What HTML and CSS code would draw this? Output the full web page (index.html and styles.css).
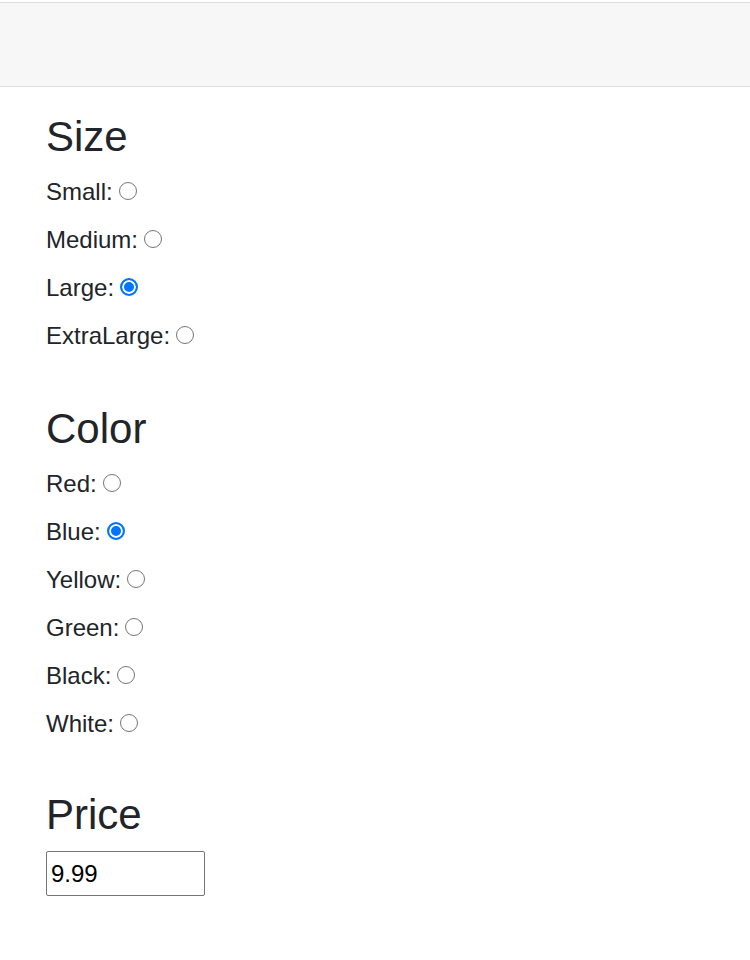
FILE: index.html
```html
<!DOCTYPE html>
<html>
<head>
<meta charset="utf-8">
<link rel="stylesheet" href="styles.css">
</head>
<body>
<header class="topbar"></header>
<main class="content">
  <section class="group">
    <h1 class="group-title">Size</h1>
    <div class="option"><label class="option-label" for="s1">Small:</label><input class="radio" type="radio" name="size" id="s1"></div>
    <div class="option"><label class="option-label" for="s2">Medium:</label><input class="radio" type="radio" name="size" id="s2"></div>
    <div class="option"><label class="option-label" for="s3">Large:</label><input class="radio" type="radio" name="size" id="s3" checked></div>
    <div class="option"><label class="option-label" for="s4">ExtraLarge:</label><input class="radio" type="radio" name="size" id="s4"></div>
  </section>
  <section class="group">
    <h1 class="group-title">Color</h1>
    <div class="option"><label class="option-label" for="c1">Red:</label><input class="radio" type="radio" name="color" id="c1"></div>
    <div class="option"><label class="option-label" for="c2">Blue:</label><input class="radio" type="radio" name="color" id="c2" checked></div>
    <div class="option"><label class="option-label" for="c3">Yellow:</label><input class="radio" type="radio" name="color" id="c3"></div>
    <div class="option"><label class="option-label" for="c4">Green:</label><input class="radio" type="radio" name="color" id="c4"></div>
    <div class="option"><label class="option-label" for="c5">Black:</label><input class="radio" type="radio" name="color" id="c5"></div>
    <div class="option"><label class="option-label" for="c6">White:</label><input class="radio" type="radio" name="color" id="c6"></div>
  </section>
  <section class="group group-price">
    <h1 class="group-title">Price</h1>
    <input class="price-input" type="text" value="9.99">
  </section>
</main>
</body>
</html>
```
FILE: styles.css
```css
html, body {
  margin: 0;
  padding: 0;
  background: #fff;
}
body {
  font-family: "Liberation Sans", Arial, sans-serif;
  color: #212529;
  padding-top: 2px;
}
.topbar {
  height: 83px;
  background: #f7f7f7;
  border-top: 1px solid #dcdcdc;
  border-bottom: 1px solid #dcdcdc;
}
.content {
  padding: 25px 46px 0;
  display: flex;
  flex-direction: column;
  gap: 44px;
}
.group {
  display: flex;
  flex-direction: column;
  align-items: flex-start;
}
.group-title {
  margin: 0 0 6px;
  font-size: 42px;
  font-weight: 400;
  line-height: 50px;
}
.option {
  height: 48px;
  display: flex;
  align-items: center;
  gap: 6px;
}
.option-label {
  font-size: 24px;
  line-height: 32px;
}
.radio {
  appearance: none;
  -webkit-appearance: none;
  box-sizing: border-box;
  width: 18px;
  height: 18px;
  margin: 0 0 2px;
  border: 1.5px solid #767676;
  border-radius: 50%;
  background: #fff;
}
.radio:checked {
  border: 2px solid #0075ff;
  background: #0075ff;
  box-shadow: inset 0 0 0 2px #fff;
}
.group-price {
  margin-top: -2px;
}
.group-price .group-title {
  margin-bottom: 11px;
}
.price-input {
  box-sizing: border-box;
  width: 159px;
  height: 45px;
  margin: 0;
  padding: 0 4px;
  font-family: "Liberation Sans", Arial, sans-serif;
  font-size: 24px;
  color: #000;
  border: 1px solid #767676;
  border-radius: 2px;
}
```
